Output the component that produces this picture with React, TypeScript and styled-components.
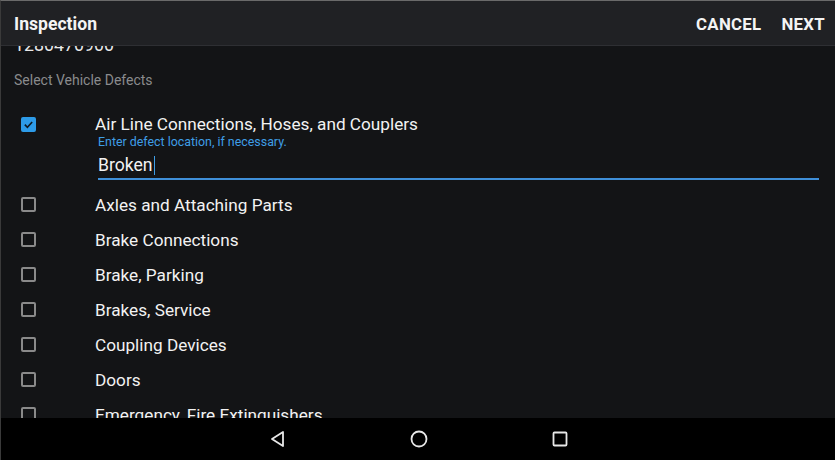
import React from "react";
import styled, { createGlobalStyle } from "styled-components";

const Global = createGlobalStyle`
  html, body { margin: 0; padding: 0; background: #000; }
  body { font-family: Roboto, "Liberation Sans", sans-serif; }
  * { box-sizing: border-box; }
`;

const Screen = styled.div`
  width: 835px;
  height: 460px;
  display: flex;
  flex-direction: column;
  background: #131416;
  overflow: hidden;
  border-top: 1px solid #6a6a6a;
  border-left: 1px solid #3a3a3a;
`;

const Header = styled.header`
  height: 45px;
  flex: none;
  display: flex;
  align-items: center;
  justify-content: space-between;
  padding: 1px 10px 0 13px;
  background: #202124;
  border-bottom: 1px solid #2e2f33;
`;

const Title = styled.h1`
  margin: 0;
  font-size: 17.6px;
  font-weight: 700;
  color: #f4f4f4;
`;

const Actions = styled.div`
  display: flex;
  gap: 20px;
`;

const ActionButton = styled.button`
  background: none;
  border: 0;
  padding: 0;
  font-family: inherit;
  font-size: 16.8px;
  font-weight: 700;
  color: #f4f4f4;
  letter-spacing: 0.3px;
`;

const Scroll = styled.div`
  flex: 1;
  overflow: hidden;
`;

const Inner = styled.div`
  margin-top: -12px;
`;

const NumberLine = styled.div`
  height: 21px;
  line-height: 21px;
  padding-left: 13px;
  font-size: 17.8px;
  color: #e8e8e8;
`;

const SectionLabel = styled.div`
  margin-top: 15px;
  height: 20px;
  line-height: 20px;
  padding-left: 13px;
  font-size: 14px;
  color: #8a8b8d;
`;

const List = styled.div`
  margin-top: 23px;
  display: flex;
  flex-direction: column;
`;

const Item = styled.div<{ $tall?: boolean }>`
  display: grid;
  grid-template-columns: 94px 1fr;
  align-items: ${(p) => (p.$tall ? "start" : "center")};
  height: ${(p) => (p.$tall ? "auto" : "35px")};
  padding-right: 16px;
`;

const BoxCell = styled.div<{ $tall?: boolean }>`
  display: flex;
  padding-left: 20px;
  padding-top: ${(p) => (p.$tall ? "4px" : "0")};
`;

const Box = styled.span<{ $checked?: boolean }>`
  width: 15px;
  height: 15px;
  border-radius: 2px;
  border: 2px solid ${(p) => (p.$checked ? "#2d9be8" : "#8a8a8a")};
  background: ${(p) => (p.$checked ? "#2d9be8" : "transparent")};
  display: flex;
  align-items: center;
  justify-content: center;
`;

const Label = styled.div`
  font-size: 17.2px;
  line-height: 22px;
  color: #f2f2f2;
`;

const Body = styled.div`
  display: flex;
  flex-direction: column;
  padding-bottom: 7px;
`;

const Hint = styled.div`
  padding-left: 3px;
  font-size: 12.4px;
  line-height: 14px;
  color: #3f9ee6;
`;

const Field = styled.div`
  margin-left: 3px;
  padding-top: 5px;
  padding-bottom: 2px;
  border-bottom: 2px solid #3f8fd8;
  font-size: 17.6px;
  line-height: 22px;
  color: #f2f2f2;
  display: flex;
  align-items: center;
`;

const Caret = styled.span`
  display: inline-block;
  width: 1.5px;
  height: 19px;
  background: #3f9ee6;
  margin-left: 1px;
`;

const NavBar = styled.nav`
  height: 42px;
  flex: none;
  background: #000;
  display: flex;
  align-items: center;
  justify-content: center;
  gap: 117px;
  padding-left: 2px;
`;

const NavIcon = styled.svg`
  width: 24px;
  height: 24px;
  display: block;
`;

const items = [
  "Axles and Attaching Parts",
  "Brake Connections",
  "Brake, Parking",
  "Brakes, Service",
  "Coupling Devices",
  "Doors",
  "Emergency, Fire Extinguishers",
];

export default function App() {
  return (
    <>
      <Global />
      <Screen>
        <Header>
          <Title>Inspection</Title>
          <Actions>
            <ActionButton>CANCEL</ActionButton>
            <ActionButton>NEXT</ActionButton>
          </Actions>
        </Header>
        <Scroll>
          <Inner>
            <NumberLine>1280470900</NumberLine>
            <SectionLabel>Select Vehicle Defects</SectionLabel>
            <List>
              <Item $tall>
                <BoxCell $tall>
                  <Box $checked>
                    <svg width="11" height="11" viewBox="0 0 12 12">
                      <path d="M2 6.2 L4.8 9 L10 3.2" fill="none" stroke="#0f1a24" strokeWidth="1.8" />
                    </svg>
                  </Box>
                </BoxCell>
                <Body>
                  <Label>Air Line Connections, Hoses, and Couplers</Label>
                  <Hint>Enter defect location, if necessary.</Hint>
                  <Field>
                    Broken
                    <Caret />
                  </Field>
                </Body>
              </Item>
              {items.map((t) => (
                <Item key={t}>
                  <BoxCell>
                    <Box />
                  </BoxCell>
                  <Label>{t}</Label>
                </Item>
              ))}
            </List>
          </Inner>
        </Scroll>
        <NavBar>
          <NavIcon viewBox="0 0 24 24">
            <path d="M17 5 L17 19 L6 12 Z" fill="none" stroke="#e8e8e8" strokeWidth="1.8" strokeLinejoin="round" />
          </NavIcon>
          <NavIcon viewBox="0 0 24 24">
            <circle cx="12" cy="12" r="7.5" fill="none" stroke="#e8e8e8" strokeWidth="1.8" />
          </NavIcon>
          <NavIcon viewBox="0 0 24 24">
            <rect x="5.5" y="5.5" width="13" height="13" rx="1" fill="none" stroke="#e8e8e8" strokeWidth="1.8" />
          </NavIcon>
        </NavBar>
      </Screen>
    </>
  );
}
